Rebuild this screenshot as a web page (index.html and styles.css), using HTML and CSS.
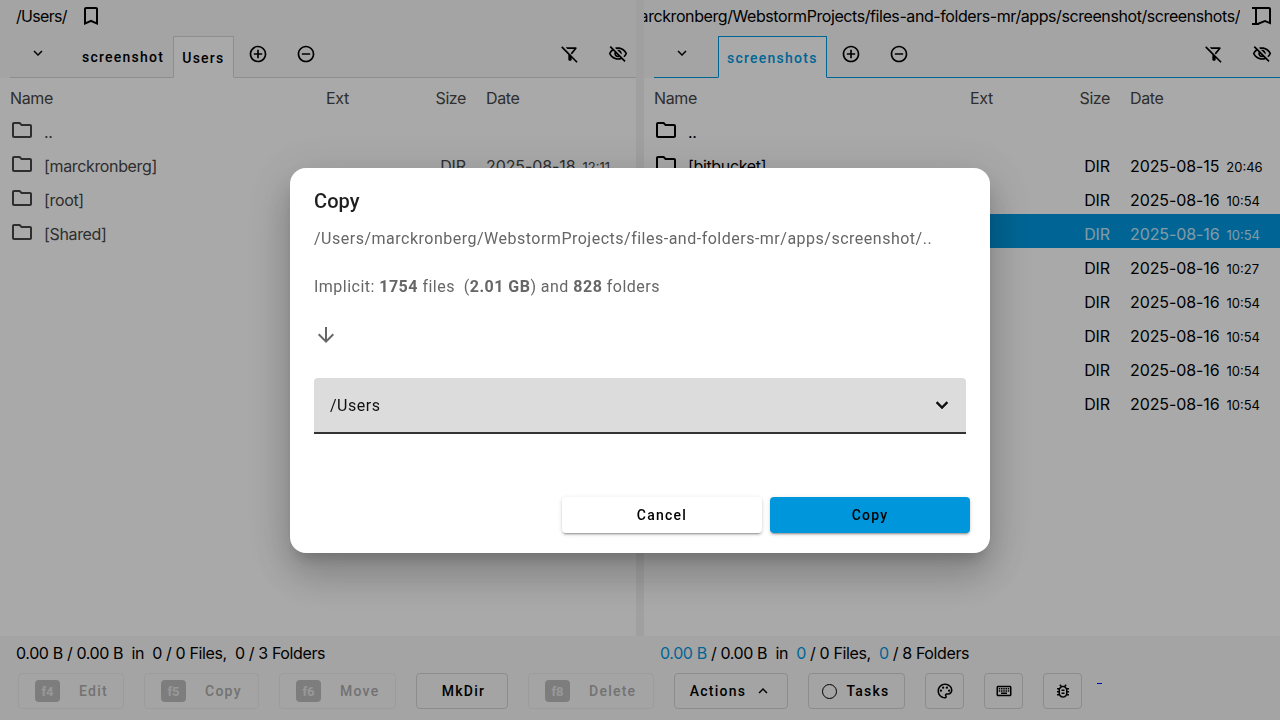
FILE: index.html
```html
<!DOCTYPE html>
<html lang="en">
<head>
<meta charset="utf-8">
<title>Copy</title>
<link rel="stylesheet" href="styles.css">
</head>
<body>
<svg class="defs" width="0" height="0" aria-hidden="true">
  <symbol id="i-folder" viewBox="0 0 24 24"><path d="M9.17 6l2 2H20v10H4V6h5.17M10 4H4c-1.1 0-1.99.9-1.99 2L2 18c0 1.1.9 2 2 2h16c1.1 0 2-.9 2-2V8c0-1.1-.9-2-2-2h-8l-2-2z"/></symbol>
  <symbol id="i-more" viewBox="0 0 24 24"><path d="M16.59 8.59L12 13.17 7.41 8.59 6 10l6 6 6-6z"/></symbol>
  <symbol id="i-less" viewBox="0 0 24 24"><path d="M12 8l-6 6 1.41 1.41L12 10.83l4.59 4.58L18 14z"/></symbol>
  <symbol id="i-add" viewBox="0 0 24 24"><path d="M13 7h-2v4H7v2h4v4h2v-4h4v-2h-4V7zm-1-5C6.48 2 2 6.48 2 12s4.48 10 10 10 10-4.48 10-10S17.52 2 12 2zm0 18c-4.41 0-8-3.59-8-8s3.59-8 8-8 8 3.59 8 8-3.59 8-8 8z"/></symbol>
  <symbol id="i-remove" viewBox="0 0 24 24"><path d="M7 11v2h10v-2H7zm5-9C6.48 2 2 6.48 2 12s4.48 10 10 10 10-4.48 10-10S17.52 2 12 2zm0 18c-4.41 0-8-3.59-8-8s3.59-8 8-8 8 3.59 8 8-3.59 8-8 8z"/></symbol>
  <symbol id="i-bookmark" viewBox="0 0 24 24"><path d="M17 3H7c-1.1 0-2 .9-2 2v16l7-3 7 3V5c0-1.1-.9-2-2-2zm0 15l-5-2.18L7 18V5h10v13z"/></symbol>
  <symbol id="i-bookmark-sel" viewBox="0 0 24 24"><path d="M2 3h17c1.1 0 2 .9 2 2v15.5l-6-2.5-6 2.5V21H2v-2h3V5H2zM7 5v14h.3L15 16l4 1.7V5z"/></symbol>
  <symbol id="i-filter-off" viewBox="0 0 24 24"><path d="M19.79 5.61C20.3 4.95 19.83 4 19 4H6.83l2 2h8.13l-4.13 5.13 1.43 1.43 5.53-6.95zM2.81 2.81L1.39 4.22 10 13v6c0 .55.45 1 1 1h2c.55 0 1-.45 1-1v-2.17l5.78 5.78 1.41-1.41L2.81 2.81z"/></symbol>
  <symbol id="i-eye-off" viewBox="0 0 24 24"><path d="M12 6c3.79 0 7.17 2.13 8.82 5.5-.59 1.22-1.42 2.27-2.41 3.12l1.41 1.41c1.39-1.23 2.49-2.77 3.18-4.53C21.27 7.11 17 4 12 4c-1.27 0-2.49.2-3.64.57l1.65 1.65C10.66 6.09 11.32 6 12 6zm-1.07 1.14L13 9.21c.57.25 1.03.71 1.28 1.28l2.07 2.07c.08-.34.14-.7.14-1.07C16.5 9.01 14.48 7 12 7c-.37 0-.72.05-1.07.14zM2.01 3.87l2.68 2.68C3.06 7.83 1.77 9.53 1 11.5 2.73 15.89 7 19 12 19c1.52 0 2.98-.29 4.32-.82l3.42 3.42 1.41-1.41L3.42 2.45 2.01 3.87zm7.5 7.5l2.61 2.61c-.04.01-.08.02-.12.02-1.38 0-2.5-1.12-2.5-2.5 0-.05.01-.08.01-.13zm-3.4-3.4l1.75 1.75c-.23.55-.36 1.15-.36 1.78 0 2.48 2.02 4.5 4.5 4.5.63 0 1.23-.13 1.77-.36l.98.98c-.88.24-1.8.38-2.75.38-3.79 0-7.17-2.13-8.82-5.5.7-1.43 1.72-2.61 2.93-3.53z"/></symbol>
  <symbol id="i-palette" viewBox="0 0 24 24"><path d="M12 22C6.49 22 2 17.51 2 12S6.49 2 12 2s10 4.04 10 9c0 3.31-2.69 6-6 6h-1.77c-.28 0-.5.22-.5.5 0 .12.05.23.13.33.41.47.64 1.06.64 1.67 0 1.38-1.12 2.5-2.5 2.5zm0-18c-4.41 0-8 3.59-8 8s3.59 8 8 8c.28 0 .5-.22.5-.5 0-.16-.08-.28-.14-.35-.41-.46-.63-1.05-.63-1.65 0-1.38 1.12-2.5 2.5-2.5H16c2.21 0 4-1.79 4-4 0-3.86-3.59-7-8-7z"/><circle cx="6.5" cy="11.5" r="1.5"/><circle cx="9.5" cy="7.5" r="1.5"/><circle cx="14.5" cy="7.5" r="1.5"/><circle cx="17.5" cy="11.5" r="1.5"/></symbol>
  <symbol id="i-keyboard" viewBox="0 0 24 24"><path d="M20 7v10H4V7h16m0-2H4c-1.1 0-1.99.9-1.99 2L2 17c0 1.1.9 2 2 2h16c1.1 0 2-.9 2-2V7c0-1.1-.9-2-2-2zm-9 3h2v2h-2zm0 3h2v2h-2zM8 8h2v2H8zm0 3h2v2H8zm-3 0h2v2H5zm0-3h2v2H5zm3 6h8v2H8zm6-3h2v2h-2zm0-3h2v2h-2zm3 3h2v2h-2zm0-3h2v2h-2z"/></symbol>
  <symbol id="i-bug" viewBox="0 0 24 24"><path d="M20 8h-2.81c-.45-.78-1.07-1.45-1.82-1.96L17 4.41 15.59 3l-2.17 2.17C12.96 5.06 12.49 5 12 5s-.96.06-1.41.17L8.41 3 7 4.41l1.62 1.63C7.88 6.55 7.26 7.22 6.81 8H4v2h2.09c-.05.33-.09.66-.09 1v1H4v2h2v1c0 .34.04.67.09 1H4v2h2.81c1.04 1.79 2.97 3 5.19 3s4.15-1.21 5.19-3H20v-2h-2.09c.05-.33.09-.66.09-1v-1h2v-2h-2v-1c0-.34-.04-.67-.09-1H20V8zm-4 4v3c0 .22-.03.47-.07.7l-.1.65-.37.65c-.72 1.24-2.04 2-3.46 2s-2.74-.77-3.46-2l-.37-.64-.1-.65C8.03 15.48 8 15.23 8 15v-4c0-.23.03-.48.07-.7l.1-.65.37-.65c.3-.52.72-.97 1.21-1.31l.57-.39.74-.18c.31-.08.63-.12.94-.12.32 0 .63.04.95.12l.68.16.61.42c.5.34.91.78 1.21 1.31l.38.65.1.65c.04.22.07.47.07.69v1zm-6 2h4v2h-4zm0-4h4v2h-4z"/></symbol>
  <symbol id="i-down" viewBox="0 0 24 24"><path d="M20 12l-1.41-1.41L13 16.17V4h-2v12.17l-5.58-5.59L4 12l8 8 8-8z"/></symbol>
</svg>

<div class="app">
  <main class="panes">
    <section class="pane">
      <div class="path-row">
        <span class="path">/Users/</span>
        <svg class="ico ico-24 bookmark"><use href="#i-bookmark"/></svg>
      </div>
      <div class="tabbar">
        <svg class="ico ico-18 tab-menu"><use href="#i-more"/></svg>
        <span class="tab tab-plain">screenshot</span>
        <span class="tab tab-active">Users</span>
        <svg class="ico ico-20 tab-add"><use href="#i-add"/></svg>
        <svg class="ico ico-20 tab-remove"><use href="#i-remove"/></svg>
        <svg class="ico ico-20 tab-filter"><use href="#i-filter-off"/></svg>
        <svg class="ico ico-20 tab-eye"><use href="#i-eye-off"/></svg>
      </div>
      <div class="row head"><span>Name</span><span>Ext</span><span class="size">Size</span><span>Date</span></div>
      <div class="row"><span class="name"><svg class="ico ico-24 folder"><use href="#i-folder"/></svg>..</span></div>
      <div class="row"><span class="name"><svg class="ico ico-24 folder"><use href="#i-folder"/></svg>[marckronberg]</span><span></span><span class="size">DIR</span><span class="date">2025-08-18<small>12:11</small></span></div>
      <div class="row"><span class="name"><svg class="ico ico-24 folder"><use href="#i-folder"/></svg>[root]</span></div>
      <div class="row"><span class="name"><svg class="ico ico-24 folder"><use href="#i-folder"/></svg>[Shared]</span></div>
    </section>
    <section class="pane pane-active">
      <div class="path-row path-row-end">
        <span class="path path-clip"><span class="path-inner">/Users/marckronberg/WebstormProjects/files-and-folders-mr/apps/screenshot/screenshots/</span></span>
        <svg class="ico ico-24 bookmark"><use href="#i-bookmark-sel"/></svg>
      </div>
      <div class="tabbar">
        <svg class="ico ico-18 tab-menu"><use href="#i-more"/></svg>
        <span class="tab tab-active tab-focus">screenshots</span>
        <svg class="ico ico-20 tab-add"><use href="#i-add"/></svg>
        <svg class="ico ico-20 tab-remove"><use href="#i-remove"/></svg>
        <svg class="ico ico-20 tab-filter"><use href="#i-filter-off"/></svg>
        <svg class="ico ico-20 tab-eye"><use href="#i-eye-off"/></svg>
      </div>
      <div class="row head"><span>Name</span><span>Ext</span><span class="size">Size</span><span>Date</span></div>
      <div class="row"><span class="name strong"><svg class="ico ico-24 folder"><use href="#i-folder"/></svg>..</span></div>
      <div class="row strong"><span class="name"><svg class="ico ico-24 folder"><use href="#i-folder"/></svg>[bitbucket]</span><span></span><span class="size">DIR</span><span class="date">2025-08-15<small>20:46</small></span></div>
      <div class="row strong"><span class="name"></span><span></span><span class="size">DIR</span><span class="date">2025-08-16<small>10:54</small></span></div>
      <div class="row row-selected"><span class="name"></span><span></span><span class="size">DIR</span><span class="date">2025-08-16<small>10:54</small></span></div>
      <div class="row strong"><span class="name"></span><span></span><span class="size">DIR</span><span class="date">2025-08-16<small>10:27</small></span></div>
      <div class="row strong"><span class="name"></span><span></span><span class="size">DIR</span><span class="date">2025-08-16<small>10:54</small></span></div>
      <div class="row strong"><span class="name"></span><span></span><span class="size">DIR</span><span class="date">2025-08-16<small>10:54</small></span></div>
      <div class="row strong"><span class="name"></span><span></span><span class="size">DIR</span><span class="date">2025-08-16<small>10:54</small></span></div>
      <div class="row strong"><span class="name"></span><span></span><span class="size">DIR</span><span class="date">2025-08-16<small>10:54</small></span></div>
    </section>
  </main>

  <footer class="footer">
    <div class="status">
      <div class="status-side">0.00 B / 0.00 B&nbsp; in&nbsp; 0 / 0 Files,&nbsp; 0 / 3 Folders</div>
      <div class="status-side"><b>0.00 B</b> / 0.00 B&nbsp; in&nbsp; <b>0</b> / 0 Files,&nbsp; <b>0</b> / 8 Folders</div>
    </div>
    <div class="actions">
      <span class="btn btn-off btn-edit"><kbd>f4</kbd>Edit</span>
      <span class="btn btn-off btn-copy"><kbd>f5</kbd>Copy</span>
      <span class="btn btn-off btn-move"><kbd>f6</kbd>Move</span>
      <span class="btn btn-mkdir">MkDir</span>
      <span class="btn btn-off btn-delete"><kbd>f8</kbd>Delete</span>
      <span class="btn btn-actions">Actions<svg class="ico ico-18"><use href="#i-less"/></svg></span>
      <span class="btn btn-tasks"><i class="ring"></i>Tasks</span>
      <span class="btn btn-icon"><svg class="ico ico-18"><use href="#i-palette"/></svg></span>
      <span class="btn btn-icon"><svg class="ico ico-18"><use href="#i-keyboard"/></svg></span>
      <span class="btn btn-icon"><svg class="ico ico-18"><use href="#i-bug"/></svg></span>
      <a class="mini-link" href="#" aria-label="link"></a>
    </div>
  </footer>
</div>

<div class="backdrop"></div>

<div class="dialog" role="dialog">
  <h2>Copy</h2>
  <p class="src">/Users/marckronberg/WebstormProjects/files-and-folders-mr/apps/screenshot/..</p>
  <p class="implicit">Implicit: <b>1754</b> files&nbsp; (<b>2.01 GB</b>) and <b>828</b> folders</p>
  <svg class="ico ico-24 arrow"><use href="#i-down"/></svg>
  <div class="select">
    <span>/Users</span>
    <svg class="ico ico-24 select-caret"><use href="#i-more"/></svg>
  </div>
  <div class="dialog-actions">
    <span class="dbtn">Cancel</span>
    <span class="dbtn dbtn-primary">Copy</span>
  </div>
</div>
</body>
</html>
```
FILE: styles.css
```css
* { box-sizing: border-box; }
html, body { margin: 0; height: 100%; overflow: hidden; }
body { font-family: Inter, "Liberation Sans", sans-serif; background: #fafafa; color: #000; }
.defs { position: absolute; }
.ico { fill: currentColor; flex: none; display: block; }
.ico-24 { width: 24px; height: 24px; }
.ico-20 { width: 20px; height: 20px; }
.ico-18 { width: 18px; height: 18px; }

.app { height: 720px; display: flex; flex-direction: column; }
.panes { flex: 1; min-height: 0; display: grid; grid-template-columns: 636px 636px; column-gap: 8px; background: #ececec; }
.pane { background: #fafafa; overflow: hidden; background-image: linear-gradient(#f2f2f2, #f2f2f2); background-size: 100% 78px; background-repeat: no-repeat; }

.path-row { height: 36px; padding: 0 0 4px 16px; display: flex; align-items: center; gap: 12px; font-size: 16px; letter-spacing: -0.7px; }
.path-row-end { padding-left: 0; gap: 10px; justify-content: flex-end; padding-right: 6px; letter-spacing: -0.42px; }
.path { white-space: nowrap; }
.path-clip { flex: 1; min-width: 0; overflow: hidden; display: flex; justify-content: flex-end; }
.path-inner { flex: none; }

.tabbar { height: 42px; margin-left: 10px; border-bottom: 1px solid #d2d2d2; display: flex; align-items: flex-end; }
.tab { font-family: Roboto, sans-serif; font-weight: 500; font-size: 14px; letter-spacing: 1.25px; height: 42px; padding: 13px 8px 0; margin-bottom: -1px; color: #000; white-space: nowrap; }
.tab-plain { padding-right: 9px; }
.tab-menu { align-self: flex-start; margin: 8px 27px 0 19px; }
.tab-active { background: #fafafa; border: 1px solid #d2d2d2; border-bottom-color: #fafafa; }
.tab-focus { color: #0096dc; border-color: #0096dc; border-bottom-color: #fafafa; }
.pane-active .tabbar { border-bottom-color: #0096dc; }
.tab-add, .tab-remove, .tab-filter, .tab-eye { align-self: flex-start; margin-top: 8px; }
.tab-add { margin-left: 14px; }
.tab-remove { margin-left: 28px; }
.tab-filter { margin-left: auto; margin-right: 28px; }
.tab-eye { margin-right: 8px; }

.row { height: 34px; padding: 6px 0 0 10px; display: grid; grid-template-columns: 316px 100px 40px 1fr; align-items: center; font-size: 16px; color: #444; letter-spacing: -0.35px; white-space: nowrap; }
.row > :last-child { padding-left: 20px; }
.row > .name { padding-left: 0; display: flex; align-items: center; gap: 10px; }
.row.head > :first-child { padding-left: 0; }
.size { text-align: right; letter-spacing: -0.1px; }
.head .size { margin-left: -10px; letter-spacing: -0.4px; }
.date { letter-spacing: -0.1px; }
.folder { margin-top: -4px; }
.date small { font-size: 13px; margin-left: 7px; letter-spacing: 0; }
.strong { color: #000; }
.row-selected { background: #0096dc; color: #c0e3f5; }

.footer { height: 84px; background: #f2f2f2; flex: none; }
.status { display: grid; grid-template-columns: 636px 636px; column-gap: 8px; height: 36px; padding-top: 7px; font-size: 16px; letter-spacing: -0.38px; }
.status-side { padding-left: 16px; white-space: nowrap; }
.status b { font-weight: 400; color: #0096dc; }

.actions { display: flex; align-items: flex-start; padding: 1px 0 0 18px; font-family: Roboto, sans-serif; font-weight: 500; font-size: 14px; letter-spacing: 1.25px; }
.btn { height: 36px; border: 1px solid #cfcfcf; border-radius: 4px; display: flex; align-items: center; justify-content: center; color: #000; white-space: nowrap; }
.btn-off { color: #a9a9a9; border-color: #e6e6e6; padding-left: 16px; }
.btn-off kbd { font-family: Roboto, sans-serif; font-size: 13px; font-weight: 700; letter-spacing: 0; width: 25px; height: 22px; border-radius: 4px; background: #b9b9b9; color: #e0e0e0; display: flex; align-items: center; justify-content: center; }
.btn-edit { width: 106px; gap: 19px; justify-content: flex-start; }
.btn-copy { width: 115px; margin-left: 20px; gap: 19px; justify-content: flex-start; }
.btn-move { width: 117px; margin-left: 20px; gap: 19px; justify-content: flex-start; }
.btn-mkdir { width: 92px; margin-left: 20px; padding-left: 3px; }
.btn-delete { width: 126px; margin-left: 20px; gap: 19px; justify-content: flex-start; }
.btn-actions { width: 114px; margin-left: 20px; gap: 8px; }
.btn-tasks { width: 97px; margin-left: 20px; gap: 9px; padding-right: 1px; }
.ring { width: 15px; height: 15px; border: 1.8px solid #000; border-radius: 50%; display: block; }
.btn-icon { width: 39px; margin-left: 20px; }
.mini-link { display: block; margin-left: 15px; width: 5px; height: 11px; border-bottom: 1px solid #0000ff; }

.backdrop { position: fixed; inset: 0; background: rgba(0, 0, 0, 0.32); }

.dialog { position: fixed; left: 290px; top: 168px; width: 700px; height: 385px; background: #fff; border-radius: 16px; padding: 20px 24px; font-family: Roboto, sans-serif; box-shadow: 0 11px 15px -7px rgba(0,0,0,.2), 0 24px 38px 3px rgba(0,0,0,.14), 0 9px 46px 8px rgba(0,0,0,.12); color: #666; }
.dialog h2 { margin: 0; font-size: 20px; line-height: 26px; font-weight: 500; color: #1f1f1f; letter-spacing: 0.1px; }
.src { margin: 14px 0 0; font-size: 16px; line-height: 22px; letter-spacing: 0.5px; white-space: nowrap; }
.implicit { margin: 26px 0 0; font-size: 16px; line-height: 22px; letter-spacing: 0.48px; }
.implicit b { font-weight: 700; }
.arrow { margin: 25px 0 0 0; }
.select { width: 652px; height: 56px; margin-top: 31px; background: #dcdcdc; border-radius: 4px 4px 0 0; border-bottom: 2px solid #333; padding: 0 12px 0 16px; display: flex; align-items: center; justify-content: space-between; color: #111; font-size: 16px; letter-spacing: 0.5px; }
.select-caret { stroke: currentColor; stroke-width: 0.5px; }
.dialog-actions { position: absolute; left: 272px; top: 329px; display: flex; gap: 8px; }
.dbtn { width: 200px; height: 36px; border-radius: 4px; background: #fff; color: #000; font-weight: 500; font-size: 14px; letter-spacing: 1.25px; display: flex; align-items: center; justify-content: center; box-shadow: 0 3px 1px -2px rgba(0,0,0,.2), 0 2px 2px 0 rgba(0,0,0,.14), 0 1px 5px 0 rgba(0,0,0,.12); }
.dbtn-primary { background: #0096dc; }
```
